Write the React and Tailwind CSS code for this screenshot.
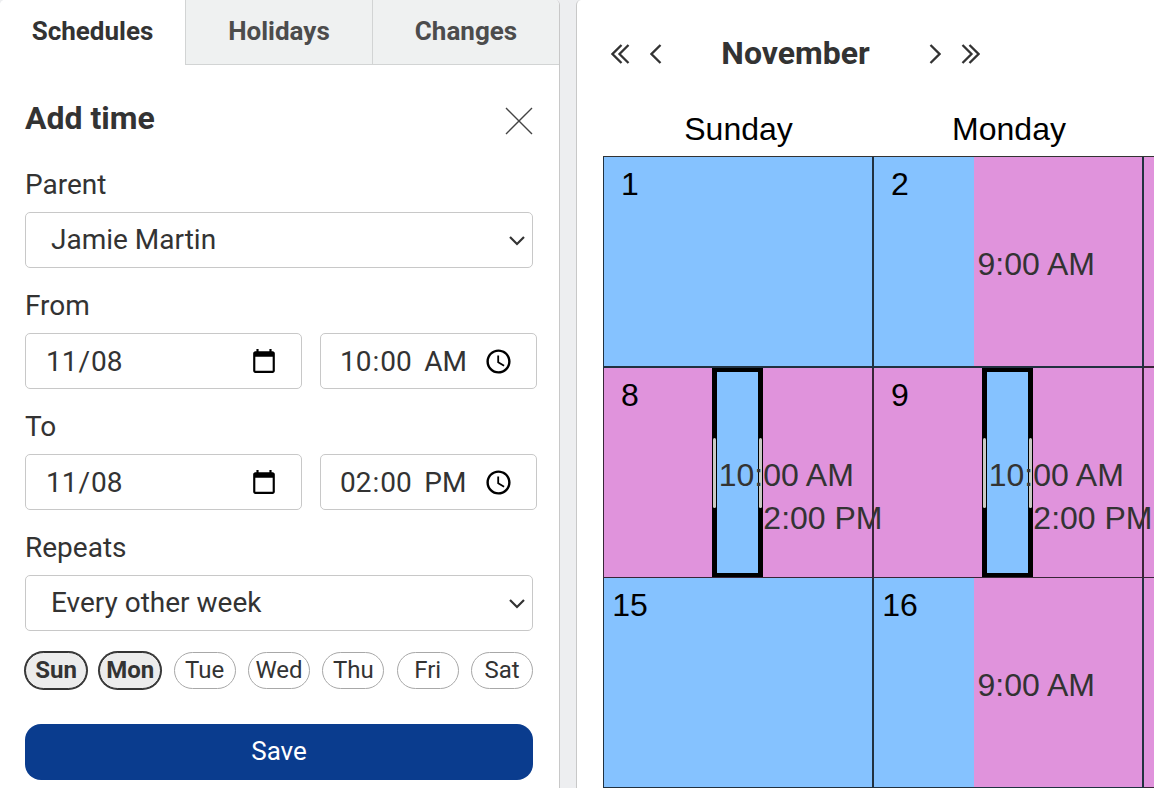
import { useState } from 'react';

const tabs = ['Schedules', 'Holidays', 'Changes'];
const weekdays = ['Sun', 'Mon', 'Tue', 'Wed', 'Thu', 'Fri', 'Sat'];

// split: hour at which the day changes hands
// visit: temporary block inside a day, in hours
const weeks = [
   {
      line: 'border-b-2',
      days: [
         { day: 1, color: 'bg-[#85c2ff]' },
         { day: 2, color: 'bg-[#85c2ff]', split: { hour: 9, label: '9:00 AM' } },
         { color: 'bg-[#e093dc]' }
      ]
   },
   {
      line: 'border-b',
      days: [
         { day: 8, color: 'bg-[#e093dc]', visit: { start: 10, end: 14, from: '10:00 AM', to: '2:00 PM' } },
         { day: 9, color: 'bg-[#e093dc]', visit: { start: 10, end: 14, from: '10:00 AM', to: '2:00 PM' } },
         { color: 'bg-[#e093dc]' }
      ]
   },
   {
      line: 'border-b',
      days: [
         { day: 15, color: 'bg-[#85c2ff]' },
         { day: 16, color: 'bg-[#85c2ff]', split: { hour: 9, label: '9:00 AM' } },
         { color: 'bg-[#e093dc]' }
      ]
   }
];

const percent = (hour) => `${(hour / 24) * 100}%`;

const fieldClass = 'h-14 w-full rounded-[5px] border border-[#c8c8c8] bg-white text-[28px] text-[#333]';

function Arrow({ label, double, right }) {
   return (
      <button type="button" aria-label={label} className="cursor-pointer">
         <svg
            width={double ? 19 : 12}
            height="20"
            viewBox={double ? '0 0 19 20' : '0 0 12 20'}
            fill="none"
            stroke="#333"
            strokeWidth="2.3"
            className={right ? 'rotate-180' : ''}
         >
            <path d="M10.5 1 1.5 10l9 9" />
            {double && <path d="M17.5 1 8.5 10l9 9" />}
         </svg>
      </button>
   );
}

function SelectField({ id, label, options }) {
   return (
      <div>
         <label htmlFor={id} className="block pb-2.5 text-[28px] leading-[35px]">{label}</label>
         <div className="relative">
            <select id={id} className={`${fieldClass} appearance-none pl-[25px] pr-12`}>
               {options.map((option) => <option key={option}>{option}</option>)}
            </select>
            <svg
               className="pointer-events-none absolute right-2 top-6"
               width="16"
               height="10"
               viewBox="0 0 16 10"
               fill="none"
               stroke="#333"
               strokeWidth="2.2"
            >
               <path d="m1 1 7 7 7-7" />
            </svg>
         </div>
      </div>
   );
}

// The year is clipped off the date field, only month and day are shown
function DateTimeField({ id, label, date, time }) {
   return (
      <div>
         <label htmlFor={id} className="block pb-2.5 text-[28px] leading-[35px]">{label}</label>
         <div className="-mr-1 grid grid-cols-[minmax(0,277fr)_minmax(0,217fr)] gap-[18px]">
            <input
               id={id}
               type="date"
               defaultValue={date}
               className={`${fieldClass} pl-[19px] pr-[21px] pt-0.5 [&::-webkit-datetime-edit]:[clip-path:inset(0_calc(100%_-_77px)_0_0)] [&::-webkit-datetime-edit-year-field]:text-transparent [&::-webkit-calendar-picker-indicator]:size-7`}
            />
            <input
               type="time"
               aria-label={`${label} time`}
               defaultValue={time}
               className={`${fieldClass} pl-[18px] pr-5 pt-0.5 [&::-webkit-datetime-edit-ampm-field]:pl-2`}
            />
         </div>
      </div>
   );
}

function SchedulePanel() {
   const [activeTab, setActiveTab] = useState('Schedules');
   const [selected, setSelected] = useState(['Sun', 'Mon']);

   const toggleDay = (day) => {
      setSelected(selected.includes(day) ? selected.filter((d) => d !== day) : [...selected, day]);
   };

   return (
      <section className="overflow-hidden rounded-t-[5px] border-r border-[#c8c8c8] bg-white">
         <div role="tablist" className="grid grid-cols-[minmax(0,185fr)_minmax(0,187fr)_minmax(0,187fr)]">
            {tabs.map((tab) => (
               <button
                  key={tab}
                  type="button"
                  role="tab"
                  aria-selected={tab === activeTab}
                  onClick={() => setActiveTab(tab)}
                  className={`h-[65px] pb-0.5 text-[26px] font-bold ${
                     tab === activeTab
                        ? 'bg-white text-[#333]'
                        : 'border-b border-l border-[#d2d4d4] bg-[#eff1f1] text-[#4c4c4c]'
                  }`}
               >
                  {tab}
               </button>
            ))}
         </div>

         <form className="flex flex-col gap-5 pb-2 pl-[25px] pr-[26px] pt-[33px]" onSubmit={(e) => e.preventDefault()}>
            <div className="mb-[9px] flex items-center justify-between">
               <h2 className="text-[32px] font-bold leading-10">Add time</h2>
               <button type="button" aria-label="Close" className="mt-1.5">
                  <svg width="28" height="28" viewBox="0 0 28 28" stroke="#444" strokeWidth="1.4">
                     <path d="m1 1 26 26M27 1 1 27" />
                  </svg>
               </button>
            </div>

            <SelectField id="parent" label="Parent" options={['Jamie Martin']} />
            <DateTimeField id="from" label="From" date="2026-11-08" time="10:00" />
            <DateTimeField id="to" label="To" date="2026-11-08" time="14:00" />
            <SelectField id="repeats" label="Repeats" options={['Every other week']} />

            <div className="mt-px flex justify-between">
               {weekdays.map((day) => (
                  <button
                     key={day}
                     type="button"
                     aria-pressed={selected.includes(day)}
                     onClick={() => toggleDay(day)}
                     className={`h-[37px] w-[62px] rounded-full border pb-0.5 text-2xl leading-8 ${
                        selected.includes(day)
                           ? 'border-[#333] bg-[#ececec] font-bold ring-1 ring-[#333]'
                           : 'border-[#a8a8a8] bg-white'
                     }`}
                  >
                     {day}
                  </button>
               ))}
            </div>

            <button type="submit" className="mt-[15px] h-14 rounded-2xl bg-[#0a3c8e] pb-0.5 text-[26px] text-white">
               Save
            </button>
         </form>
      </section>
   );
}

function Visit({ visit }) {
   return (
      <>
         <div
            className="absolute inset-y-0 -ml-1 -mr-[3px] border-x-[5px] border-y-4 border-black bg-[#85c2ff]"
            style={{ left: percent(visit.start), right: percent(24 - visit.end) }}
         >
            <span className="absolute -left-1 top-[66px] h-[70px] w-[3px] rounded-full bg-[#c9c9c4]" />
            <span className="absolute -right-1 top-[66px] h-[70px] w-[3px] rounded-full bg-[#c9c9c4]" />
         </div>
         <span className="absolute top-[89px] z-10 ml-[3px] whitespace-nowrap leading-9 text-[#333]" style={{ left: percent(visit.start) }}>
            {visit.from}
         </span>
         <span className="absolute top-[132px] z-10 ml-[3px] whitespace-nowrap leading-9 text-[#333]" style={{ left: percent(visit.end) }}>
            {visit.to}
         </span>
      </>
   );
}

function DayCell({ entry, line, first, last }) {
   const { day, color, split, visit } = entry;

   return (
      <td className={`border-black/75 p-0 ${line} ${color} ${first ? 'border-l' : ''} ${last ? '' : 'border-r-2'}`}>
         <div className="relative h-[209px]">
            {split && (
               <div className="absolute inset-y-0 right-0 -ml-px bg-[#e093dc]" style={{ left: percent(split.hour) }}>
                  <span className="absolute left-1 top-[89px] whitespace-nowrap leading-9 text-[#333]">{split.label}</span>
               </div>
            )}
            <div className="w-[52px] pt-[11px] text-center leading-8">{day}</div>
            {visit && <Visit visit={visit} />}
         </div>
      </td>
   );
}

function CalendarPanel() {
   return (
      <section className="overflow-hidden rounded-tl-[5px] border-l border-[#c8c8c8] bg-white">
         <nav className="flex h-[108px] items-center pb-px pl-[34px]">
            <div className="flex gap-5">
               <Arrow label="Previous year" double />
               <Arrow label="Previous month" />
            </div>
            <h2 className="w-[267px] pb-0.5 text-center text-[32px] font-bold">November</h2>
            <div className="flex gap-5">
               <Arrow label="Next month" right />
               <Arrow label="Next year" double right />
            </div>
         </nav>

         <div className="pl-[26px]">
            <table className="w-full table-fixed border-separate border-spacing-0 font-['Liberation_Sans',Arial,sans-serif] text-[32px] text-black">
               <colgroup>
                  <col className="w-[271px]" />
                  <col className="w-[270px]" />
                  <col />
               </colgroup>
               <thead>
                  <tr>
                     <th className="h-[49px] border-b border-black/80 p-0 pb-1.5 font-normal leading-9">Sunday</th>
                     <th className="border-b border-black/80 p-0 pb-1.5 font-normal leading-9">Monday</th>
                     <td className="border-b border-black/80 p-0" />
                  </tr>
               </thead>
               <tbody>
                  {weeks.map((week, row) => (
                     <tr key={row}>
                        {week.days.map((entry, i) => (
                           <DayCell
                              key={i}
                              entry={entry}
                              line={week.line}
                              first={i === 0}
                              last={i === week.days.length - 1}
                           />
                        ))}
                     </tr>
                  ))}
               </tbody>
            </table>
         </div>
      </section>
   );
}

export default function App() {
   return (
      <main className="grid min-h-screen grid-cols-[minmax(0,560fr)_minmax(0,578fr)] gap-4 bg-[#edeef0] font-[Roboto,sans-serif] text-[#333]">
         <SchedulePanel />
         <CalendarPanel />
      </main>
   );
}
